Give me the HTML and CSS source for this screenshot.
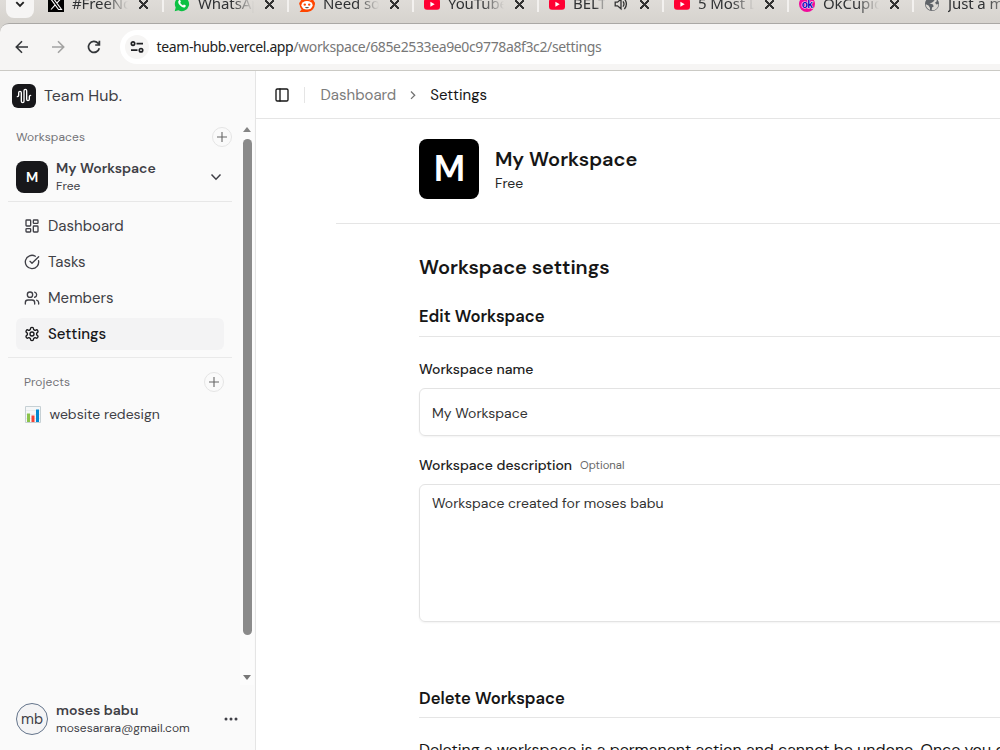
FILE: index.html
```html
<!DOCTYPE html>
<html lang="en">
<head>
<meta charset="utf-8">
<title>Team Hub - Settings</title>
<link rel="stylesheet" href="styles.css">
</head>
<body>
<div class="window">
  <div class="tabstrip">
    <div class="tabsearch"><svg width="10" height="7" viewBox="0 0 10 7"><path d="M1.3 1.2 5 4.9 8.7 1.2" fill="none" stroke="#222" stroke-width="1.9"/></svg></div>
    <div class="tab first"><svg class="fav" viewBox="0 0 16 16"><rect width="16" height="16"/><path d="M2.5 2.5h3l8 11h-3zM13 2.5 8.8 7.2M7.2 8.9 3 13.5" fill="none" stroke="#fff" stroke-width="1.1"/></svg><span class="title">#FreeNow</span><i class="close"></i></div>
    <div class="tab"><svg class="fav" viewBox="0 0 16 16"><path d="M8 .8a7.2 7.2 0 1 1-3.6 13.5L.7 15.3l1-3.8A7.2 7.2 0 0 1 8 .8z" fill="#0cc143"/><path d="M5 4.2c.6-.5 1.1-.3 1.4.4l.5 1.2-.7 1c.6 1.2 1.5 2 2.8 2.6l.9-.9 1.7.8c.5 1.2-.6 2.2-1.7 2.1C6.8 11 4.3 8 4.2 6c0-.8.3-1.3.8-1.8z" fill="#fff"/></svg><span class="title">WhatsApp</span><i class="close"></i></div>
    <div class="tab"><svg class="fav" viewBox="0 0 16 16"><path d="M.6 16l2-2.5A7.5 7.5 0 1 1 8 16z" fill="#ff4500"/><circle cx="2.2" cy="7.5" r="1.9" fill="#ff4500"/><circle cx="14" cy="7.5" r="1.9" fill="#ff4500"/><ellipse cx="8" cy="9.3" rx="5.6" ry="4.2" fill="#fff"/><circle cx="5.8" cy="8.6" r="1.2" fill="#ff4500"/><circle cx="10.2" cy="8.6" r="1.2" fill="#ff4500"/><path d="M5.8 11.2h4.4Q8 13.2 5.8 11.2" fill="#222"/><circle cx="11.2" cy="3" r="1.3" fill="#fff"/></svg><span class="title">Need some</span><i class="close"></i></div>
    <div class="tab"><svg class="fav" viewBox="0 0 16 16"><rect y="2.6" width="16" height="11.2" rx="3" fill="#ff0033"/><path d="M6.4 5.7v5l4.3-2.5z" fill="#fff"/></svg><span class="title">YouTube</span><i class="close"></i></div>
    <div class="tab"><svg class="fav" viewBox="0 0 16 16"><rect y="2.6" width="16" height="11.2" rx="3" fill="#ff0033"/><path d="M6.4 5.7v5l4.3-2.5z" fill="#fff"/></svg><span class="title short">BELTS</span><svg class="sound" viewBox="0 0 14 14"><path d="M1.2 5.2h2.3l3.5-3v9.600l-3.5-3H1.2z" fill="none" stroke="#333" stroke-width="1.3"/><path d="M9 4.3q2 2.7 0 5.4M10.4 1.8q4 5.2 0 10.4" fill="none" stroke="#333" stroke-width="1.3"/></svg><i class="close"></i></div>
    <div class="tab"><svg class="fav" viewBox="0 0 16 16"><rect y="2.6" width="16" height="11.2" rx="3" fill="#ff0033"/><path d="M6.4 5.7v5l4.3-2.5z" fill="#fff"/></svg><span class="title">5 Most Lik</span><i class="close"></i></div>
    <div class="tab"><svg class="fav" viewBox="0 0 16 16"><circle cx="8" cy="8" r="8" fill="#f10b9b"/><text x="8" y="11.5" text-anchor="middle" class="ok">ok</text></svg><span class="title">OkCupid</span><i class="close"></i></div>
    <div class="tab last"><svg class="fav" viewBox="0 0 16 16"><circle cx="8" cy="8" r="7" fill="#5f6368"/><path d="M8.5 1.5 11 3.5 9.5 5.5 7.8 6.8 5.5 7.3 9 8.6 9.7 10.5 8 11.5 7.7 14.3A6 6 0 0 0 14.3 8L12.5 8.5 11 6.8 13 5A6.5 6.5 0 0 0 8.5 1.5zM1.8 8.3 4.5 9.5 6 12v2A6.5 6.5 0 0 1 1.8 8.3z" fill="#dcd9d4"/></svg><span class="title">Just a moment</span></div>
  </div>
  <div class="toolbar">
    <svg class="nav" viewBox="0 0 16 16"><path d="M14 8H2.500M8 2.300 2.300 8 8 13.700" fill="none" stroke="#333639" stroke-width="1.6"/></svg>
    <svg class="nav" viewBox="0 0 16 16"><path d="M2 8h11.500M8 2.300 13.700 8 8 13.700" fill="none" stroke="#a3a3a2" stroke-width="1.6"/></svg>
    <svg class="nav" viewBox="0 0 16 16"><path d="M13.3 9.2A5.5 5.5 0 1 1 12 4.2l1 1.3M13.4 1.8v4.2H9.2" fill="none" stroke="#333639" stroke-width="1.7"/></svg>
    <div class="omnibox"><span class="site"><svg width="14" height="14" viewBox="0 0 14 14" fill="none" stroke="#202124" stroke-width="1.7"><circle cx="3" cy="3.6" r="1.7"/><path d="M6.5 3.6H13M1 10.2h6.500"/><circle cx="11" cy="10.2" r="1.7"/></svg></span><span class="url"><b>team-hubb.vercel.app</b>/workspace/685e2533ea9e0c9778a8f3c2/settings</span></div>
  </div>
  <div class="app">
    <aside class="sidebar">
      <div class="brand"><span class="logo"><svg width="16" height="16" viewBox="0 0 24 24"><path d="M2 13a2 2 0 0 0 2-2V7a2 2 0 0 1 4 0v13a2 2 0 0 0 4 0V4a2 2 0 0 1 4 0v13a2 2 0 0 0 4 0v-4a2 2 0 0 1 2-2"/></svg></span><span class="brandname">Team Hub.</span></div>
      <div class="scroll">
        <div class="scrollbody">
          <div class="group"><span class="caption">Workspaces</span><span class="plus"><svg viewBox="0 0 12 12"><path d="M6 1v10M1 6h10"/></svg></span></div>
          <div class="switcher"><span class="avatar">M</span><div class="who"><span class="name">My Workspace</span><span class="sub">Free</span></div><svg class="chev" viewBox="0 0 12 12"><path d="m1.5 3.5 4.5 4.700 4.500-4.700"/></svg></div>
          <nav class="menu">
            <a><svg class="icon" viewBox="0 0 24 24"><rect width="7" height="9" x="3" y="3" rx="1"/><rect width="7" height="5" x="14" y="3" rx="1"/><rect width="7" height="9" x="14" y="12" rx="1"/><rect width="7" height="5" x="3" y="16" rx="1"/></svg><span>Dashboard</span></a>
            <a><svg class="icon" viewBox="0 0 24 24"><path d="M21.801 10A10 10 0 1 1 17 3.335"/><path d="m9 11 3 3L22 4"/></svg><span>Tasks</span></a>
            <a><svg class="icon" viewBox="0 0 24 24"><path d="M16 21v-2a4 4 0 0 0-4-4H6a4 4 0 0 0-4 4v2"/><circle cx="9" cy="7" r="4"/><path d="M22 21v-2a4 4 0 0 0-3-3.870M16 3.130a4 4 0 0 1 0 7.750"/></svg><span>Members</span></a>
            <a class="active"><svg class="icon" viewBox="0 0 24 24"><path d="M12.220 2h-.44a2 2 0 0 0-2 2v.18a2 2 0 0 1-1 1.730l-.43.25a2 2 0 0 1-2 0l-.15-.08a2 2 0 0 0-2.730.73l-.22.38a2 2 0 0 0 .73 2.730l.15.1a2 2 0 0 1 1 1.720v.51a2 2 0 0 1-1 1.740l-.15.09a2 2 0 0 0-.73 2.730l.22.38a2 2 0 0 0 2.730.73l.15-.08a2 2 0 0 1 2 0l.43.25a2 2 0 0 1 1 1.730V20a2 2 0 0 0 2 2h.44a2 2 0 0 0 2-2v-.18a2 2 0 0 1 1-1.730l.43-.25a2 2 0 0 1 2 0l.15.08a2 2 0 0 0 2.730-.73l.22-.39a2 2 0 0 0-.73-2.730l-.15-.08a2 2 0 0 1-1-1.740v-.5a2 2 0 0 1 1-1.740l.15-.09a2 2 0 0 0 .73-2.730l-.22-.38a2 2 0 0 0-2.730-.73l-.15.08a2 2 0 0 1-2 0l-.43-.25a2 2 0 0 1-1-1.730V4a2 2 0 0 0-2-2z"/><circle cx="12" cy="12" r="3"/></svg><span>Settings</span></a>
          </nav>
          <div class="group projects"><span class="caption">Projects</span><span class="plus"><svg viewBox="0 0 12 12"><path d="M6 1v10M1 6h10"/></svg></span></div>
          <div class="project"><svg width="16" height="17" viewBox="0 0 16 17"><path d="M.5.5h15v16H.5z" fill="#f5f7f8" stroke="#c6d0d4"/><path d="M1 4.500h14M1 8.500h14M1 12.500h14" stroke="#dfe5e8" stroke-width=".6"/><path d="M2 7.500h3v8.500H2z" fill="#8bc34a"/><path d="M6.500 9.500h3V16h-3z" fill="#f44336"/><path d="M11 3.500h3V16h-3z" fill="#0288d1"/></svg><span>website redesign</span></div>
        </div>
        <div class="scrollbar"><i class="up"></i><i class="thumb"></i><i class="down"></i></div>
      </div>
      <div class="user"><span class="circle">mb</span><div class="who"><span class="name">moses babu</span><span class="sub">mosesarara@gmail.com</span></div><svg class="dots" viewBox="0 0 14 4"><circle cx="2" cy="2" r="1.5"/><circle cx="7" cy="2" r="1.5"/><circle cx="12" cy="2" r="1.5"/></svg></div>
    </aside>
    <main class="main">
      <header class="crumbs"><svg class="panel" viewBox="0 0 24 24"><rect width="18" height="18" x="3" y="3" rx="2"/><path d="M9 3v18"/></svg><i class="bar"></i><span class="parent">Dashboard</span><svg class="arrow" viewBox="0 0 14 14"><path d="m5 3.500 3.700 3.700L5 10.900"/></svg><span>Settings</span></header>
      <section class="hero"><span class="big">M</span><div class="who"><span class="wsname">My Workspace</span><span class="plan">Free</span></div></section>
      <section class="form">
        <h1>Workspace settings</h1>
        <h2>Edit Workspace</h2>
        <div class="label">Workspace name</div>
        <div class="input">My Workspace</div>
        <div class="label second"><span>Workspace description</span><small>Optional</small></div>
        <div class="input area">Workspace created for moses babu</div>
        <h2 class="delete">Delete Workspace</h2>
        <p>Deleting a workspace is a permanent action and cannot be undone. Once you delete a workspace</p>
      </section>
    </main>
  </div>
</div>
</body>
</html>
```
FILE: styles.css
```css
* { box-sizing: border-box; }
body { margin: 0; font-family: "DM Sans", Inter, sans-serif; background: #fff; color: #161616; }
svg { flex: none; display: block; }
span, small { white-space: nowrap; }
.window { width: 1000px; height: 750px; overflow: hidden; display: flex; flex-direction: column; background: linear-gradient(#dfdcd8, #d6d3ce 23px); }

/* Browser tabs */
.tabstrip { height: 23px; flex: none; display: flex; align-items: flex-start; overflow: hidden; font-family: "Noto Sans", sans-serif; font-size: 15px; color: #303234; }
.tabsearch { width: 28px; height: 28px; margin: -10px 8px 0 6px; border-radius: 8px; background: #f6f5f4; display: flex; flex: none; align-items: center; justify-content: center; }
.tab { flex: none; width: 125px; height: 24px; margin-top: -8px; display: flex; align-items: center; padding-left: 10px; position: relative; }
.tab.first { width: 122px; padding-left: 6px; }
.tab + .tab::before { content: ""; position: absolute; left: -2px; top: 4px; width: 2px; height: 16px; background: #f3f1ef; }
.tab.last { width: 140px; }
.fav { width: 16px; height: 16px; margin-right: 8px; }
.title { width: 57px; overflow: hidden; line-height: 24px; margin-top: -2px; letter-spacing: -.1px; -webkit-mask-image: linear-gradient(90deg, #000 34px, transparent 56px); }
.title.short { width: 32px; -webkit-mask-image: linear-gradient(90deg, #000 22px, transparent 34px); }
.last .title { width: 90px; -webkit-mask-image: linear-gradient(90deg, #000 35px, transparent 75px); }
.sound { width: 14px; height: 14px; margin: 0 2px 0 9px; }
.close { width: 9px; height: 9px; margin-left: 10px; background: linear-gradient(45deg, transparent 43%, #333 43%, #333 57%, transparent 57%), linear-gradient(-45deg, transparent 43%, #333 43%, #333 57%, transparent 57%); }
.ok { font: bold 10px "Liberation Sans"; fill: #0500be; stroke: #fff; stroke-width: 1px; paint-order: stroke; letter-spacing: -.5px; }

/* Address bar */
.toolbar { height: 48px; flex: none; border-top: 1px solid #aaa8a5; border-bottom: 1px solid #cbcac5; border-radius: 9px 0 0 0; background: #f6f5f4; display: flex; align-items: center; padding-left: 14px; }
.nav { width: 16px; height: 16px; margin-right: 20px; }
.omnibox { flex: 1; height: 34px; margin-left: -2px; border-radius: 17px 0 0 17px; background: #fff; display: flex; align-items: center; padding-left: 5px; }
.site { width: 24px; height: 24px; border-radius: 12px; background: #f6f5f4; display: flex; align-items: center; justify-content: center; margin-right: 7.5px; }
.url { font-family: "Noto Sans", sans-serif; font-size: 14px; letter-spacing: -.37px; color: #777; margin-top: -1px; }
.url b { font-weight: 400; color: #222; }

/* Sidebar */
.app { flex: 1; display: flex; min-height: 0; background: #fff; }
.sidebar { width: 256px; flex: none; border-right: 1px solid #e5e5e5; background: #fafafa; display: flex; flex-direction: column; color: #3f3f46; }
.brand { height: 49px; flex: none; display: flex; align-items: center; gap: 8px; padding-left: 12px; }
.logo { width: 24px; height: 24px; border-radius: 6px; background: #18181b; display: flex; align-items: center; justify-content: center; }
.logo svg { fill: none; stroke: #fff; stroke-width: 2; stroke-linecap: round; }
.brandname { font-size: 16px; letter-spacing: .1px; }
.scroll { height: 565px; flex: none; display: flex; }
.scrollbody { width: 240px; padding: 5px 8px 0; }
.group { height: 24px; display: flex; align-items: center; justify-content: space-between; padding-left: 8px; }
.caption { font-size: 12px; color: #737378; letter-spacing: .1px; }
.plus { width: 20px; height: 20px; border-radius: 10px; border: 1px solid #e5e5e5; display: flex; align-items: center; justify-content: center; }
.plus svg { width: 12px; height: 12px; stroke: #666; stroke-width: 1.1; }
.switcher { height: 53px; border-bottom: 1px solid #e7e7e7; display: flex; align-items: center; padding: 3px 10px 0 8px; }
.avatar { width: 32px; height: 32px; border-radius: 8px; background: #18181b; color: #fff; font-weight: 600; font-size: 14px; display: flex; align-items: center; justify-content: center; }
.who { display: flex; flex-direction: column; flex: 1; padding: 2px 0 0 8px; align-items: flex-start; }
.name { font-size: 14px; line-height: 17px; font-weight: 600; }
.sub { font-size: 12px; line-height: 18px; }
.chev { width: 12px; height: 12px; fill: none; stroke: #3f3f46; stroke-width: 1.5; }
.menu { display: flex; flex-direction: column; gap: 4px; padding: 8px 8px 7px; border-bottom: 1px solid #e9e9e9; }
.menu a { height: 32px; border-radius: 6px; display: flex; align-items: center; gap: 8px; padding: 0 0 1px 8px; font-size: 15px; }
.menu a.active { background: #f3f3f4; color: #18181b; font-weight: 500; }
.icon, .panel { width: 16px; height: 16px; fill: none; stroke: currentColor; stroke-width: 2; stroke-linecap: round; stroke-linejoin: round; }
.projects { margin-top: 12px; padding: 0 8px 0 16px; }
.project { height: 32px; margin-top: 4px; display: flex; align-items: center; gap: 8.5px; padding-left: 17px; font-size: 14px; }
.scrollbar { width: 14px; background: #fcfcfc; display: flex; flex-direction: column; align-items: center; padding-top: 7px; }
.up, .down { border: 4.5px solid transparent; border-top: 0; border-bottom: 5px solid #858585; }
.thumb { width: 9px; height: 496px; margin: 7px 0 40px; border-radius: 5px; background: #8b8b8b; }
.down { border-bottom: 0; border-top: 5px solid #777; }
.user { height: 64px; margin-top: 2px; display: flex; align-items: center; padding: 0 17px 0 16px; }
.circle { width: 32px; height: 32px; border: 1px solid #64748b; border-radius: 16px; background: #f4f4f5; display: flex; align-items: center; justify-content: center; font-size: 14.5px; }
.dots { width: 14px; height: 4px; fill: #3f3f46; }

/* Settings page */
.main { flex: 1; min-width: 0; overflow: hidden; }
.crumbs { height: 48px; border-bottom: 1px solid #e5e5e5; display: flex; align-items: center; padding-left: 18px; font-size: 15px; }
.bar { width: 1px; height: 16px; background: #e5e5e5; margin: 0 15.5px 0 14px; }
.parent { color: #7c7c7c; }
.arrow { width: 14px; height: 14px; margin: 0 10px; fill: none; stroke: #737373; stroke-width: 1.3; }
.hero { height: 105px; margin-left: 80px; border-bottom: 1px solid #e5e5e5; padding: 20px 0 0 83.4px; display: flex; align-items: flex-start; }
.big { width: 60px; height: 60px; background: #000; color: #fff; border-radius: 8px; display: flex; align-items: center; justify-content: center; font-size: 36px; font-weight: 600; padding-bottom: 2px; }
.hero .who { padding: 6px 0 0 15.5px; }
.wsname { font-size: 20px; line-height: 28px; font-weight: 600; }
.plan { font-size: 14px; line-height: 20px; color: #262626; }
.form { padding: 28px 0 0 163px; }
h1, h2, p { margin: 0; white-space: nowrap; }
h1 { font-size: 20px; line-height: 30px; font-weight: 600; margin-bottom: 20px; letter-spacing: -.05px; }
h2 { font-size: 16.6px; line-height: 30px; font-weight: 600; border-bottom: 1px solid #e5e5e5; height: 35px; }
.label { display: flex; align-items: center; height: 20px; margin-top: 22px; font-size: 14px; font-weight: 500; color: #222; }
.label small { font-size: 11.25px; font-weight: 400; color: #666; margin-left: 8px; }
.label.second { margin-top: 19px; }
.input { height: 48px; margin: 9px -10px 0 0; border: 1px solid #e3e3e3; border-radius: 6px; padding: 0 12px; line-height: 48px; font-size: 14px; color: #333; box-shadow: 0 1px 2px rgba(0,0,0,.05); }
.input.area { height: 138px; line-height: 37px; }
h2.delete { margin-top: 61px; line-height: 32px; }
p { font-size: 16px; line-height: 24px; margin-top: 20px; letter-spacing: -.02px; }
```
